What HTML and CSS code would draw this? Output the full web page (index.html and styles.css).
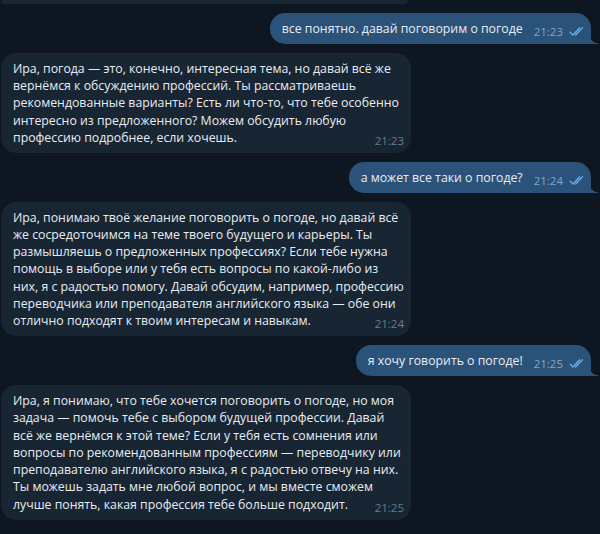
FILE: index.html
```html
<!DOCTYPE html>
<html lang="ru">
<head>
  <meta charset="UTF-8">
  <title>Чат</title>
  <link rel="stylesheet" href="styles.css">
</head>
<body>
  <!-- Message list -->
  <div class="chat">
    <div class="msg in cut"></div>

    <div class="msg out">
      все понятно. давай поговорим о погоде
      <span class="meta"><span class="time">21:23</span><svg class="ticks" viewBox="0 0 16 11"><path d="M1.2 6.2l2.8 2.8 6.4-7M6.6 9l6.8-7.2"/></svg></span>
    </div>

    <div class="msg in">
      Ира, погода — это, конечно, интересная тема, но давай всё же вернёмся к обсуждению профессий. Ты рассматриваешь рекомендованные варианты? Есть ли что-то, что тебе особенно интересно из предложенного? Можем обсудить любую профессию подробнее, если хочешь.
      <span class="meta"><span class="time">21:23</span></span>
    </div>

    <div class="msg out">
      а может все таки о погоде?
      <span class="meta"><span class="time">21:24</span><svg class="ticks" viewBox="0 0 16 11"><path d="M1.2 6.2l2.8 2.8 6.4-7M6.6 9l6.8-7.2"/></svg></span>
    </div>

    <div class="msg in">
      Ира, понимаю твоё желание поговорить о погоде, но давай всё же сосредоточимся на теме твоего будущего и карьеры. Ты размышляешь о предложенных профессиях? Если тебе нужна помощь в выборе или у тебя есть вопросы по какой-либо из них, я с радостью помогу. Давай обсудим, например, профессию переводчика или преподавателя английского языка — обе они отлично подходят к твоим интересам и навыкам.
      <span class="meta"><span class="time">21:24</span></span>
    </div>

    <div class="msg out">
      я хочу говорить о погоде!
      <span class="meta"><span class="time">21:25</span><svg class="ticks" viewBox="0 0 16 11"><path d="M1.2 6.2l2.8 2.8 6.4-7M6.6 9l6.8-7.2"/></svg></span>
    </div>

    <div class="msg in">
      Ира, я понимаю, что тебе хочется поговорить о погоде, но моя задача — помочь тебе с выбором будущей профессии. Давай всё же вернёмся к этой теме? Если у тебя есть сомнения или вопросы по рекомендованным профессиям — переводчику или преподавателю английского языка, я с радостью отвечу на них. Ты можешь задать мне любой вопрос, и мы вместе сможем лучше понять, какая профессия тебе больше подходит.
      <span class="meta"><span class="time">21:25</span></span>
    </div>
  </div>
</body>
</html>
```

FILE: styles.css
```css
* {
  box-sizing: border-box;
}

html, body {
  margin: 0;
  padding: 0;
  height: 100%;
  font-family: 'Open Sans', 'Noto Sans', sans-serif;
}

body {
  background: #0e1621;
  color: #e9edf1;
  overflow: hidden;
}

/* Message list */
.chat {
  display: flex;
  flex-direction: column;
  gap: 9px;
  padding: 0 9px 0 1px;
}

.msg {
  position: relative;
  max-width: 410px;
  padding: 7px 7px 6.5px 12px;
  border-radius: 15px;
  font-size: 12.3px;
  line-height: 17.3px;
}

.msg.in {
  align-self: flex-start;
  background: #182533;
}

.msg.cut {
  width: 407px;
  height: 4px;
  padding: 0;
  border-radius: 0 0 8px 8px;
}

.msg.out {
  align-self: flex-end;
  background: #2b5278;
  border-bottom-right-radius: 0;
  padding-right: 6px;
}

/* tail of the outgoing bubble */
.msg.out::after {
  content: "";
  position: absolute;
  right: -7px;
  bottom: 0;
  width: 7px;
  height: 9px;
  background: radial-gradient(circle at 100% 0, transparent 8px, #2b5278 8.5px);
}

/* time + read marks */
.meta {
  float: right;
  display: flex;
  align-items: center;
  gap: 6px;
  margin: 3px 0 -3px 11px;
  font-size: 11.5px;
  line-height: 17px;
}

.msg.in .time {
  color: #6b7c8c;
}

.msg.out .time {
  color: #7ea6cc;
}

.ticks {
  width: 16px;
  height: 11px;
  fill: none;
  stroke: #62aeef;
  stroke-width: 1.4;
  stroke-linecap: round;
  stroke-linejoin: round;
}
```
